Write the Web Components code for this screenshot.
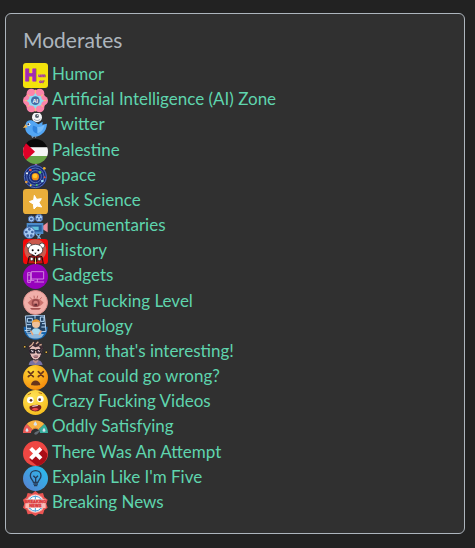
<!DOCTYPE html>
<html lang="en">
<head>
<meta charset="utf-8">
<meta name="viewport" content="width=device-width, initial-scale=1">
<title>Moderates</title>
<style>
  body {
    --card-bg: #303030;
    --muted: #adb5bd;
    --link: #5fd5ae;
    margin: 0;
    padding: 13px 10px 14px 5px;
    background: #222;
    color: var(--muted);
    font: 17px/25px Lato, "Noto Sans", sans-serif;
  }
</style>
</head>
<body>
  <moderates-card>
    <span slot="title">Moderates</span>
    <community-link icon="humor">Humor</community-link>
    <community-link icon="ai">Artificial Intelligence (AI) Zone</community-link>
    <community-link icon="twitter">Twitter</community-link>
    <community-link icon="palestine">Palestine</community-link>
    <community-link icon="space">Space</community-link>
    <community-link icon="science">Ask Science</community-link>
    <community-link icon="documentaries">Documentaries</community-link>
    <community-link icon="history">History</community-link>
    <community-link icon="gadgets">Gadgets</community-link>
    <community-link icon="level">Next Fucking Level</community-link>
    <community-link icon="futurology">Futurology</community-link>
    <community-link icon="interesting">Damn, that's interesting!</community-link>
    <community-link icon="wrong">What could go wrong?</community-link>
    <community-link icon="crazy">Crazy Fucking Videos</community-link>
    <community-link icon="satisfying">Oddly Satisfying</community-link>
    <community-link icon="attempt">There Was An Attempt</community-link>
    <community-link icon="explain">Explain Like I'm Five</community-link>
    <community-link icon="news">Breaking News</community-link>
  </moderates-card>

<script>
// Community avatars, all on a 75x75 grid
const ICONS = {
  humor: `
    <rect width="75" height="75" rx="9" fill="#f3e30c"/>
    <g fill="#a12bb4" stroke="#a12bb4" font-family="DejaVu Sans, sans-serif" font-weight="bold">
      <text x="4" y="55" font-size="46" stroke-width="3">H</text>
      <text x="45" y="43" font-size="13">um</text>
      <text x="48" y="59" font-size="13">or</text>
    </g>`,
  ai: `
    <g fill="#fb84aa">
      <circle cx="37" cy="38" r="32"/>
      <circle cx="25" cy="16" r="14"/><circle cx="50" cy="16" r="14"/>
      <circle cx="14" cy="38" r="14"/><circle cx="61" cy="38" r="14"/>
      <circle cx="25" cy="59" r="14"/><circle cx="50" cy="59" r="14"/>
    </g>
    <path d="M14 20l15 12M60 20L46 32M14 56l15-13M60 56L46 43M37 5v14M37 56v14M5 38h10M60 38h10" stroke="#f7c873" stroke-width="3" fill="none"/>
    <path d="M37 15l6 8 11 2 2 8 7 5-7 6-2 8-11 2-6 8-6-8-11-2-2-8-7-6 7-5 2-8 11-2z" fill="#8ddcf4"/>
    <circle cx="37" cy="38" r="13" fill="#456ba5"/>
    <text x="37" y="44" font-size="17" font-weight="bold" fill="#fff" text-anchor="middle" font-family="Liberation Sans, sans-serif">AI</text>`,
  twitter: `
    <path d="M9 30c4-10 17-11 27-3l10 7 13-8-1 9 14-3c-1 13-5 24-16 32-7 6-14 8-23 7l-6 3-2-6C11 64 2 49 9 30z" fill="#53a6f4"/>
    <path d="M30 38c12 1 19 9 14 24-12-3-18-10-14-24z" fill="#2f83de"/>
    <path d="M43 42c8 0 15-3 21-7-1 13-9 22-21 26z" fill="#78bdfa"/>
    <path d="M8 34L0 45l14-2z" fill="#f3b653"/>
    <circle cx="17" cy="34" r="5" fill="#fff"/><circle cx="16" cy="34" r="3" fill="#25324d"/>
    <circle cx="42" cy="13" r="15" fill="#f5f6f8"/>
    <circle cx="42" cy="9" r="6" fill="#5a6471"/><circle cx="44" cy="7" r="2" fill="#fff"/>
    <path d="M33 18c5 6 14 6 19 0" stroke="#9aa5b1" stroke-width="3" fill="none"/>
    <path d="M29 69v6M38 69v6" stroke="#8894aa" stroke-width="3"/>`,
  palestine: `
    <clipPath id="round"><circle cx="37.5" cy="37.5" r="37.5"/></clipPath>
    <g clip-path="url(#round)">
      <path d="M0 0h75v25H0z" fill="#090909"/>
      <path d="M0 25h75v26H0z" fill="#f5f5f5"/>
      <path d="M0 51h75v24H0z" fill="#68a447"/>
      <path d="M0 4l36 34L0 71z" fill="#df0027"/>
    </g>`,
  space: `
    <path d="M39 0v8" stroke="#9565b8" stroke-width="7"/>
    <circle cx="37" cy="38" r="35" fill="#172c79"/>
    <g fill="none" stroke="#5771b8" stroke-width="3">
      <circle cx="37" cy="38" r="33"/><circle cx="37" cy="38" r="26"/><circle cx="37" cy="38" r="18"/>
    </g>
    <circle cx="37" cy="38" r="11" fill="#f08c15"/><circle cx="36" cy="36" r="7" fill="#ffc52b"/>
    <circle cx="64" cy="13" r="4" fill="#f0b22a"/><circle cx="22" cy="18" r="4" fill="#f4533d"/>
    <circle cx="51" cy="25" r="4" fill="#66ce52"/><circle cx="10" cy="54" r="4" fill="#e29c3d"/>
    <circle cx="58" cy="51" r="4" fill="#9adbf4"/><circle cx="23" cy="64" r="3" fill="#f5d33f"/>
    <circle cx="65" cy="40" r="3" fill="#ea4b39"/><circle cx="41" cy="63" r="3" fill="#49c65e"/>
    <circle cx="12" cy="28" r="3" fill="#fff"/>`,
  science: `
    <rect width="75" height="75" rx="10" fill="#e9ae3a"/>
    <path d="M34 19l7 12 14-2-7 12 8 13-14-3-9 9-2-15-12-7 13-5z" fill="#fff" stroke="#fff" stroke-width="3" stroke-linejoin="round"/>`,
  documentaries: `
    <path d="M59 36l15-11v30L59 46z" fill="#ef8c9c"/>
    <path d="M11 27h50v33H11z" fill="#4c8ac9"/>
    <path d="M15 33h41v20H15z" fill="#275e9b"/>
    <path d="M25 38h22v10H25z" fill="#62c2da"/>
    <path d="M39 60l14 14M52 60l-8 14" stroke="#7bb0df" stroke-width="4"/>
    <g fill="#a8cdf4" stroke="#4b6cac" stroke-width="3">
      <circle cx="25" cy="15" r="9"/><circle cx="48" cy="12" r="11"/><circle cx="19" cy="56" r="17"/>
    </g>
    <g fill="#4266a4">
      <circle cx="25" cy="15" r="4"/><circle cx="48" cy="7" r="3"/><circle cx="43" cy="15" r="3"/><circle cx="53" cy="15" r="3"/>
      <circle cx="19" cy="46" r="4"/><circle cx="10" cy="54" r="4"/><circle cx="28" cy="54" r="4"/><circle cx="14" cy="65" r="4"/><circle cx="25" cy="65" r="4"/>
    </g>`,
  history: `
    <rect width="75" height="75" rx="10" fill="#f30808"/>
    <circle cx="37" cy="34" r="33" fill="#c95a4d"/>
    <path d="M14 75l4-22 19-5 20 5 4 22z" fill="#c51515" stroke="#161010" stroke-width="3"/>
    <path d="M32 50l5 8 6-8v18H32z" fill="#171315"/>
    <path d="M36 58h3v17h-3z" fill="#eed26b"/>
    <g fill="#fff" stroke="#1c1717" stroke-width="2">
      <circle cx="18" cy="20" r="8"/><circle cx="57" cy="20" r="8"/>
      <path d="M16 31c2-20 41-20 43 0 1 9-4 13-11 15l-10 6-11-6c-8-2-12-6-11-15z"/>
      <circle cx="26" cy="60" r="5"/><circle cx="49" cy="60" r="5"/>
    </g>
    <circle cx="29" cy="34" r="3"/><circle cx="46" cy="34" r="3"/><path d="M34 41h7l-4 5z"/>`,
  gadgets: `
    <circle cx="37.5" cy="37.5" r="37.5" fill="#9702bd"/>
    <g fill="none" stroke="#d084dd" stroke-width="3">
      <path d="M25 23h37v22H25zM43 45v9M34 54h29M14 26h9v29h-9zM14 33h9"/>
      <path d="M16 49h18M25 41v8"/>
    </g>`,
  level: `
    <circle cx="37.5" cy="37.5" r="36" fill="#f0afa9" stroke="#dc918d" stroke-width="3"/>
    <path d="M14 38c13-17 35-17 48 0-13 17-35 17-48 0z" fill="#c9736e"/>
    <circle cx="38" cy="39" r="12" fill="#99494a"/><circle cx="38" cy="39" r="7" fill="#d5837e"/>
    <path d="M21 22l6 7M33 17l1 8M44 17l-2 8M56 22l-6 7" stroke="#bd6762" stroke-width="3"/>
    <path d="M21 54h33l-5 5H26z" fill="#a65351"/><path d="M34 41h8v6h-8z" fill="#5d2931"/>`,
  futurology: `
    <path d="M2 35h72c0 24-15 39-36 39S2 59 2 35z" fill="#1765ad"/>
    <path d="M7 3l57-3 5 49-57 5z" fill="#234365" stroke="#b5d2ef" stroke-width="3"/>
    <g stroke="#b9dcfa" stroke-width="3" fill="none">
      <path d="M13 10h15v11H13zM52 6h11v13H52zM11 29h13M57 26h10M12 40h12M55 36h12M36 3v8M5 47l18-2"/>
    </g>
    <circle cx="39" cy="27" r="12" fill="#f0c19b"/>
    <path d="M27 24c0-15 24-15 25 0l-7-4-12 1z" fill="#ec9e39"/>
    <path d="M25 57c0-12 5-17 14-17s16 5 16 17z" fill="#a7d8ee"/>
    <path d="M12 57h51l-7 10c-11 5-26 5-37 0z" fill="#8fb9dc"/>
    <path d="M23 47l7 13M55 47l-7 13" stroke="#e9a77e" stroke-width="5"/>`,
  interesting: `
    <path d="M17 75c2-13 9-15 20-15s19 2 22 15z" fill="#7872a4"/>
    <path d="M30 49h16v15l-8 7-8-7z" fill="#b88c8f"/>
    <path d="M18 24c0-22 40-23 41 1l-4 18c-3 10-9 17-17 17S24 53 21 43z" fill="#e3bdb8" stroke="#2e252e" stroke-width="3"/>
    <path d="M17 29l-3-10 7-2-2-8 9 2 1-8 9 5 7-6 3 8 8-1-1 8 6 6-7 7-6-11-11 3-8-5-6 6z" fill="#3a2930"/>
    <path d="M27 15l5-9M39 12l7-7M19 20l8-6M49 16l7-3" stroke="#d7ad93" stroke-width="4"/>
    <path d="M21 29h14v10H23zM41 29h14l-2 10H42zM35 31h6" fill="#6a5b68" stroke="#141118" stroke-width="3"/>
    <path d="M25 31l5 4M45 31l5 4" stroke="#fff" stroke-width="3"/>
    <path d="M31 48c4-4 11-4 15 0l-3 5h-9z" fill="#793c46"/><path d="M33 48h11" stroke="#fff" stroke-width="2"/>
    <path d="M5 15v10M0 20h10M70 32v10M65 37h10" stroke="#0a080a" stroke-width="3"/>
    <circle cx="5" cy="20" r="3" fill="#d9ad45"/><circle cx="70" cy="37" r="3" fill="#d9ad45"/>`,
  wrong: `
    <radialGradient id="face" cx=".35" cy=".25" r=".8"><stop stop-color="#ffda35"/><stop offset="1" stop-color="#f58a0c"/></radialGradient>
    <circle cx="37.5" cy="37.5" r="37.5" fill="url(#face)"/>
    <path d="M16 20l15 15M31 20L16 35M46 20l15 15M61 20L46 35" stroke="#6b371b" stroke-width="5" stroke-linecap="round"/>
    <path d="M24 60c1-18 26-18 28 0-4 2-24 2-28 0z" fill="#68351b"/>`,
  crazy: `
    <radialGradient id="face" cx=".4" cy=".3" r=".8"><stop stop-color="#ffe358"/><stop offset="1" stop-color="#f5bb18"/></radialGradient>
    <circle cx="37.5" cy="37.5" r="37.5" fill="url(#face)"/>
    <circle cx="22" cy="30" r="10" fill="#fff"/><circle cx="52" cy="27" r="10" fill="#fff"/>
    <circle cx="24" cy="31" r="4" fill="#5b321f"/><circle cx="50" cy="29" r="4" fill="#5b321f"/>
    <path d="M14 15l10-5M47 8l10 3" stroke="#ba7116" stroke-width="3"/>
    <path d="M20 49c9-4 23-7 32-3 7 4 1 17-9 18-13 2-27-4-23-15z" fill="#782020"/>
    <path d="M27 48c6-2 13-3 19-2l-2 2-15 2z" fill="#fff"/>
    <path d="M26 58c6-6 16-5 21-1-6 6-15 7-21 1z" fill="#f24d48"/>`,
  satisfying: `
    <path d="M0 54c0-11 4-20 11-27l18 17c-4 3-5 6-5 10z" fill="#eb5b56"/>
    <path d="M11 27c15-15 38-15 53 0L46 44c-5-5-12-5-17 0z" fill="#f9b242"/>
    <path d="M64 27c7 7 11 16 11 27H51c0-4-2-7-5-10z" fill="#36ae9d"/>
    <path d="M34 55c2-5 11-6 20-13-6 9-9 15-15 17-4 0-6-1-5-4z" fill="#626a73"/>
    <g fill="#d7e3f0"><path d="M37 19c-7 9-7 13 0 13s7-4 0-13zM12 38c-6 8-6 12 0 12s6-4 0-12zM63 38c-6 8-6 12 0 12s6-4 0-12z"/></g>
    <path d="M29 43c5-5 12-5 17 0" fill="none" stroke="#db7736" stroke-width="3"/>`,
  attempt: `
    <circle cx="37.5" cy="37.5" r="37.5" fill="#ee4743"/>
    <path d="M56 21l17 17c1 16-12 35-31 36L19 56z" fill="#a90e17"/>
    <path d="M23 22l31 31M54 22L23 53" stroke="#fff" stroke-width="12"/>`,
  explain: `
    <linearGradient id="blue" x1="0" y1="1" x2="1" y2="0"><stop stop-color="#5b7ed0"/><stop offset="1" stop-color="#25c1ef"/></linearGradient>
    <circle cx="37.5" cy="37.5" r="37.5" fill="url(#blue)"/>
    <g fill="none" stroke="#243b59" stroke-width="4" stroke-linejoin="round">
      <path d="M31 49c0-7-9-9-9-20 0-9 7-15 16-15s16 6 16 15c0 11-9 13-9 20zM31 54h14M33 59h10M38 49V36l-7-7M38 36l7-7"/>
    </g>`,
  news: `
    <path d="M37 0l10 8 13-2 4 13 10 7-4 12 4 12-10 7-4 13-13-2-10 7-10-7-13 2-4-13-10-7 4-12-4-12 10-7 4-13 13 2z" fill="#eb5553"/>
    <circle cx="37" cy="38" r="28" fill="#f5b2ae"/>
    <circle cx="37" cy="38" r="25" fill="#fff"/>
    <g fill="none" stroke="#4aa1d8" stroke-width="3"><circle cx="37" cy="38" r="22"/><path d="M37 14v48M18 25c12 5 26 5 38 0M18 52c12-5 26-5 38 0"/></g>
    <path d="M7 25h61v26H7z" fill="#f8bcb8"/>
    <g fill="#d93639" stroke="#d93639" font-family="Liberation Sans, sans-serif" font-weight="bold" text-anchor="middle">
      <text x="37" y="36" font-size="12">BREAKING</text>
      <text x="37" y="49" font-size="12">NEWS</text>
    </g>`
};

class CommunityIcon extends HTMLElement {
  connectedCallback() {
    const root = this.attachShadow({ mode: "open" });
    root.innerHTML = `
      <style>
        :host { display: block; flex: none; width: 25px; height: 25px; }
        svg { display: block; width: 100%; height: 100%; }
      </style>
      <svg viewBox="0 0 75 75" aria-hidden="true">${ICONS[this.getAttribute("name")]}</svg>
    `;
  }
}
customElements.define("community-icon", CommunityIcon);

class CommunityLink extends HTMLElement {
  connectedCallback() {
    const icon = this.getAttribute("icon");
    const root = this.attachShadow({ mode: "open" });
    this.setAttribute("role", "listitem");
    root.innerHTML = `
      <style>
        :host { display: flex; }
        a {
          display: flex;
          gap: 4px;
          color: var(--link);
          text-decoration: none;
        }
        a:hover { text-decoration: underline; }
        .name { line-height: 22px; }
      </style>
      <a href="#${icon}">
        <community-icon name="${icon}"></community-icon>
        <span class="name"><slot></slot></span>
      </a>
    `;
  }
}
customElements.define("community-link", CommunityLink);

class ModeratesCard extends HTMLElement {
  connectedCallback() {
    const root = this.attachShadow({ mode: "open" });
    root.innerHTML = `
      <style>
        :host {
          display: block;
          padding: 15px 17px 17px;
          background: var(--card-bg);
          border: 1px solid var(--muted);
          border-radius: 6px;
        }
        h5 {
          margin: 0 0 12px;
          font-size: 21px;
          font-weight: 400;
          line-height: 22px;
        }
        .list {
          display: flex;
          flex-direction: column;
          justify-content: space-between;
          min-height: 453px;
        }
      </style>
      <h5><slot name="title"></slot></h5>
      <div class="list" role="list"><slot></slot></div>
    `;
  }
}
customElements.define("moderates-card", ModeratesCard);
</script>
</body>
</html>
